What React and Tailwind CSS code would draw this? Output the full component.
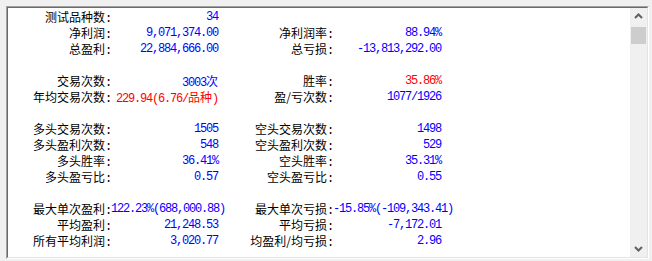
import React from "react";

const BLUE = "text-[#0000ff]";
const RED = "text-[#ff0000]";

const rows = [
    ["测试品种数", "34", BLUE, "", "", BLUE],
    ["净利润", "9,071,374.00", BLUE, "净利润率", "88.94%", BLUE],
    ["总盈利", "22,884,666.00", BLUE, "总亏损", "-13,813,292.00", BLUE],
    null,
    ["交易次数", "3003次", BLUE, "胜率", "35.86%", RED],
    ["年均交易次数", "229.94(6.76/品种)", RED, "盈/亏次数", "1077/1926", BLUE],
    null,
    ["多头交易次数", "1505", BLUE, "空头交易次数", "1498", BLUE],
    ["多头盈利次数", "548", BLUE, "空头盈利次数", "529", BLUE],
    ["多头胜率", "36.41%", BLUE, "空头胜率", "35.31%", BLUE],
    ["多头盈亏比", "0.57", BLUE, "空头盈亏比", "0.55", BLUE],
    null,
    ["最大单次盈利", "122.23%(688,000.88)", BLUE, "最大单次亏损", "-15.85%(-109,343.41)", BLUE],
    ["平均盈利", "21,248.53", BLUE, "平均亏损", "-7,172.01", BLUE],
    ["所有平均利润", "3,020.77", BLUE, "均盈利/均亏损", "2.96", BLUE],
];

// split so that CJK chars use the CJK font and the rest stays monospace
function Value({ text }) {
    const parts = text.split(/([\u4e00-\u9fff]+)/).filter(Boolean);
    return parts.map((p, i) =>
        /[\u4e00-\u9fff]/.test(p) ? (
            <span key={i} className="font-['Noto_Sans_CJK_SC',sans-serif] text-[12px] tracking-normal leading-[16px]">{p}</span>
        ) : (
            <span key={i}>{p}</span>
        )
    );
}

function Label({ text }) {
    if (!text) return <div className="h-[16px]" />;
    return (
        <div className="h-[16px] overflow-visible text-right whitespace-nowrap text-black font-['Noto_Sans_CJK_SC',sans-serif] text-[12px] leading-[16px]">
            {text}
            <span className="font-['Liberation_Mono',monospace] text-[12px] tracking-[-1.2px] leading-[16px]">:</span>
        </div>
    );
}

function Cell({ text, color }) {
    return (
        <div className={`h-[16px] overflow-visible text-right whitespace-nowrap font-['Liberation_Mono','Noto_Sans_CJK_SC',monospace] text-[12px] tracking-[-1.2px] leading-[16px] ${color}`}>
            {text && <Value text={text} />}
        </div>
    );
}

function Chevron({ down }) {
    return (
        <svg width="17" height="17" viewBox="0 0 17 17">
            <polyline
                points={down ? "5,7 8.5,10.5 12,7" : "5,10 8.5,6.5 12,10"}
                fill="none"
                stroke="#606060"
                strokeWidth="2"
            />
        </svg>
    );
}

export default function App() {
    return (
        <div className="w-[652px] h-[261px] bg-[#f0f0f0] pt-[6px] pl-[6px] overflow-hidden select-none">
            <div className="w-[643px] h-[253px] border border-[#a0a0a0] border-r-white border-b-white">
                <div className="h-full border border-[#696969] border-r-[#e3e3e3] border-b-[#e3e3e3] bg-white flex">
                    {/* stats grid */}
                    <div className="flex-1 pt-[1px]">
                        <div className="grid grid-cols-[103px_107px_115px_108px] auto-rows-[16px]">
                            {rows.map((r, i) =>
                                r ? (
                                    <React.Fragment key={i}>
                                        <Label text={r[0]} />
                                        <Cell text={r[1]} color={r[2]} />
                                        <Label text={r[3]} />
                                        <Cell text={r[4]} color={r[5]} />
                                    </React.Fragment>
                                ) : (
                                    <div key={i} className="col-span-4 h-[16px]" />
                                )
                            )}
                        </div>
                    </div>

                    {/* scrollbar */}
                    <div className="w-[17px] bg-[#f0f0f0] flex flex-col">
                        <div className="h-[17px] flex items-center justify-center">
                            <Chevron />
                        </div>
                        <div className="mx-[1px] mt-[2px] h-[17px] bg-[#cdcdcd]" />
                        <div className="flex-1" />
                        <div className="h-[17px] flex items-center justify-center">
                            <Chevron down />
                        </div>
                    </div>
                </div>
            </div>
        </div>
    );
}
